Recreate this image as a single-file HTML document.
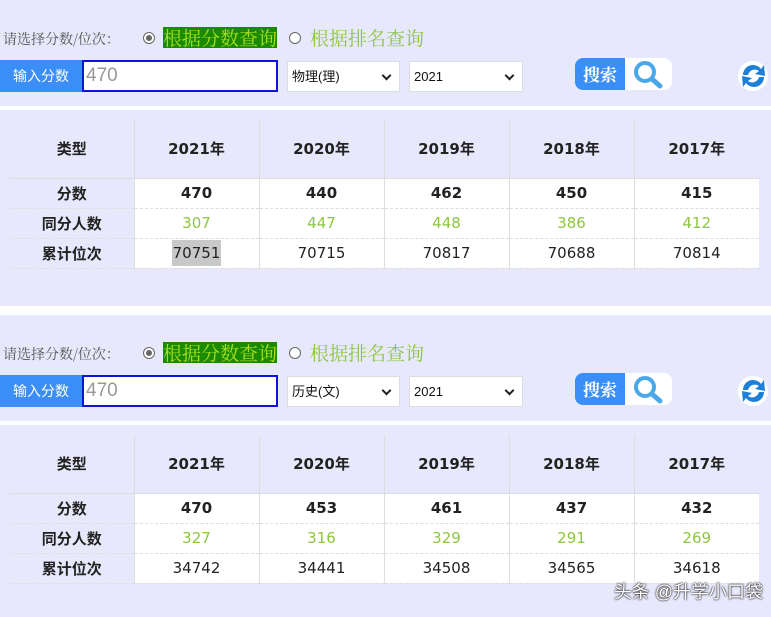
<!DOCTYPE html>
<html><head><meta charset="utf-8"><style>
*{margin:0;padding:0;box-sizing:border-box}
body{width:771px;height:617px;background:#fff;position:relative;overflow:hidden;font-family:"Liberation Sans","Noto Sans CJK SC",sans-serif}
.sec{position:absolute;left:0;width:771px;height:306px;background:#e8e8fc}
.a{position:absolute}
.lbl{left:3px;top:29px;font:14px "Noto Serif CJK SC","WenQuanYi Zen Hei",serif;color:#555}
.radio{width:12px;height:12px;border:1px solid #666;border-radius:50%;background:#fff}
.radio.on::after{content:"";position:absolute;left:2px;top:2px;width:6px;height:6px;border-radius:50%;background:#666}
.g{font:19px "Noto Serif CJK SC",serif;line-height:21px;color:#8dc63f}
.g.on{background:#1a8a00;color:#a8e020}
.inl{left:0;top:60px;width:82px;height:32px;background:#3a8ef6;color:#fff;font-size:14px;line-height:32px;text-align:center}
.inp{left:82px;top:60px;width:196px;height:32px;border:2px solid #1010e0;background:#fff;color:#999;font-size:19px;line-height:28px;padding-left:2px}
.sel{top:61px;height:31px;background:#fff;border:1px solid #ddd;font-size:13px;line-height:29px;padding-left:4px;color:#111}
.sel::after{content:"";position:absolute;right:9px;top:10px;width:5px;height:5px;border-right:2px solid #222;border-bottom:2px solid #222;transform:rotate(45deg)}
.btn{left:575px;top:58px;width:97px;height:32px;border-radius:8px;background:#fff;overflow:hidden}
.btn b{position:absolute;left:0;top:0;width:50px;height:32px;background:#3a8ef6;color:#fff;font:bold 17px "Noto Serif CJK SC",serif;line-height:32px;text-align:center}
.line{left:0;top:106px;width:771px;height:4px;background:#fff}
table{position:absolute;left:10px;top:120px;border-collapse:collapse;font-family:"DejaVu Sans","Noto Sans CJK SC",sans-serif;font-size:14px;color:#222}
td{text-align:center;border-left:1px solid #ddd;width:125px;height:30px;padding:0}
td:first-child{width:124px;border-left:none;font-weight:bold;font-size:15px;background:#e8e8fc;border-bottom:1px solid #e0e0f0}
tr.h td{height:58px;font-weight:bold;font-size:15px;background:#e8e8fc;border-bottom:1px solid #ddd}
tr.r td{background:#fff;border-bottom:1px dashed #ddd}
tr.r td:first-child{background:#e8e8fc}
.b td{font-weight:bold;font-size:15px}
.gr td{color:#8dc63f;font-size:15px}
.gr td:first-child{color:#222}
tr.r td{font-size:15px}
.hl{background:#c8c8c8;padding:4px 1px}
.wm{right:8px;top:578px;font-size:18px;color:#fff;text-shadow:0 0 2px #000,0 0 1px #000}
</style></head><body>

<div class="sec" style="top:0">
<div class="a lbl">请选择分数/位次：</div>
<div class="a radio on" style="left:143px;top:32px"></div>
<div class="a g on" style="left:163px;top:27px">根据分数查询</div>
<div class="a radio" style="left:289px;top:32px"></div>
<div class="a g" style="left:310px;top:27px">根据排名查询</div>
<div class="a inl">输入分数</div>
<div class="a inp">470</div>
<div class="a sel" style="left:287px;width:113px">物理(理)</div>
<div class="a sel" style="left:409px;width:114px">2021</div>
<div class="a btn"><b>搜索</b><svg class="a" style="left:56px;top:2px" width="36" height="30"><circle cx="14" cy="12" r="9" fill="none" stroke="#4aa8e8" stroke-width="4"/><line x1="21" y1="19" x2="29" y2="26" stroke="#4aa8e8" stroke-width="5" stroke-linecap="round"/></svg></div>
<svg class="a" style="left:738px;top:60px" width="31" height="32"><circle cx="15" cy="16" r="15" fill="#fff"/><path d="M5 15 A10 10 0 0 1 23 9 L26 5 L27 16 L17 14 L21 11 A7 7 0 0 0 10 15 Z" fill="#1e7fd8"/><path d="M26 17 A10 10 0 0 1 8 23 L5 27 L4 16 L14 18 L10 21 A7 7 0 0 0 21 17 Z" fill="#1e7fd8"/></svg>
<div class="a line"></div>
<table>
<tr class="h"><td>类型</td><td>2021年</td><td>2020年</td><td>2019年</td><td>2018年</td><td>2017年</td></tr>
<tr class="r b"><td>分数</td><td>470</td><td>440</td><td>462</td><td>450</td><td>415</td></tr>
<tr class="r gr"><td>同分人数</td><td>307</td><td>447</td><td>448</td><td>386</td><td>412</td></tr>
<tr class="r"><td>累计位次</td><td><span class="hl">70751</span></td><td>70715</td><td>70817</td><td>70688</td><td>70814</td></tr>
</table>
</div>

<div class="sec" style="top:315px;height:302px">
<div class="a lbl">请选择分数/位次：</div>
<div class="a radio on" style="left:143px;top:32px"></div>
<div class="a g on" style="left:163px;top:27px">根据分数查询</div>
<div class="a radio" style="left:289px;top:32px"></div>
<div class="a g" style="left:310px;top:27px">根据排名查询</div>
<div class="a inl">输入分数</div>
<div class="a inp">470</div>
<div class="a sel" style="left:287px;width:113px">历史(文)</div>
<div class="a sel" style="left:409px;width:114px">2021</div>
<div class="a btn"><b>搜索</b><svg class="a" style="left:56px;top:2px" width="36" height="30"><circle cx="14" cy="12" r="9" fill="none" stroke="#4aa8e8" stroke-width="4"/><line x1="21" y1="19" x2="29" y2="26" stroke="#4aa8e8" stroke-width="5" stroke-linecap="round"/></svg></div>
<svg class="a" style="left:738px;top:60px" width="31" height="32"><circle cx="15" cy="16" r="15" fill="#fff"/><path d="M5 15 A10 10 0 0 1 23 9 L26 5 L27 16 L17 14 L21 11 A7 7 0 0 0 10 15 Z" fill="#1e7fd8"/><path d="M26 17 A10 10 0 0 1 8 23 L5 27 L4 16 L14 18 L10 21 A7 7 0 0 0 21 17 Z" fill="#1e7fd8"/></svg>
<div class="a line"></div>
<table>
<tr class="h"><td>类型</td><td>2021年</td><td>2020年</td><td>2019年</td><td>2018年</td><td>2017年</td></tr>
<tr class="r b"><td>分数</td><td>470</td><td>453</td><td>461</td><td>437</td><td>432</td></tr>
<tr class="r gr"><td>同分人数</td><td>327</td><td>316</td><td>329</td><td>291</td><td>269</td></tr>
<tr class="r"><td>累计位次</td><td>34742</td><td>34441</td><td>34508</td><td>34565</td><td>34618</td></tr>
</table>
</div>
<div class="a wm">头条 @升学小口袋</div>
</body></html>
